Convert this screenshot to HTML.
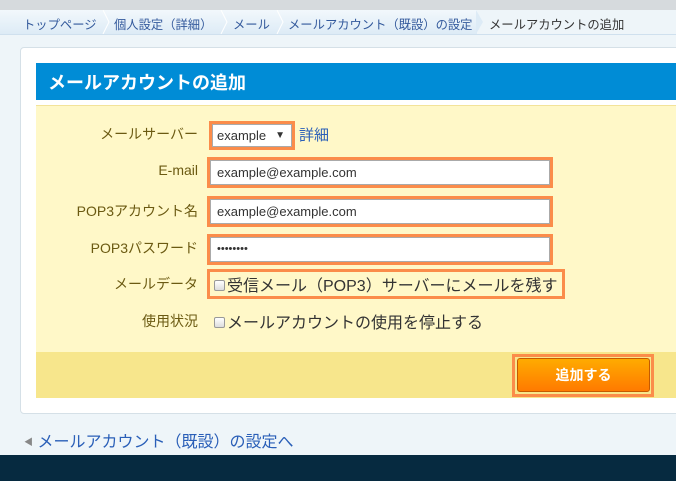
<!DOCTYPE html>
<html><head><meta charset="utf-8"><style>
*{box-sizing:border-box;margin:0;padding:0}
body{width:676px;height:481px;overflow:hidden;background:#eef5f9;font-family:"Liberation Sans","Noto Sans CJK JP",sans-serif;position:relative}
.top{position:absolute;left:0;top:0;width:676px;height:10px;background:#d6dadd}
.bc{position:absolute;left:0;top:10px;width:676px;height:25px;background:linear-gradient(#f2f8fc,#ddebf6);border-bottom:1px solid #cfe0ee;font-size:12.3px;color:#33599c}
.bc span{position:absolute;top:5px;white-space:nowrap}
.sep{position:absolute;top:0;width:8px;height:24px}
.card{position:absolute;left:20px;top:47px;width:680px;height:367px;background:#fff;border:1px solid #d5e0e7;border-radius:4px}
.hd{position:absolute;left:36px;top:63px;width:660px;height:37px;background:#008cd6;color:#fff;font-weight:bold;font-size:18px;padding:6px 0 0 12px}
.form{position:absolute;left:36px;top:105px;width:660px;height:247px;background:#fff8c8;border-top:1px solid #f3e39a}
.foot{position:absolute;left:36px;top:352px;width:660px;height:46px;background:#f7e68c}
.lb{position:absolute;right:478px;font-size:14px;color:#6b5a12;white-space:nowrap}
.ob{position:absolute;border:3px solid #fb8c4a}
.inp{position:absolute;background:#fff;border:1px solid #aaa;font-size:13px;color:#333;padding:4px 6px}
.cb{display:inline-block;width:11px;height:11px;border:1px solid #999;border-radius:2px;background:linear-gradient(#fff,#ddd);vertical-align:0px;margin-right:2px}
.ck{position:absolute;font-size:16px;color:#333;white-space:nowrap}
.btn{position:absolute;left:517px;top:358px;width:133px;height:34px;border:1px solid #c55a00;border-radius:3px;background:linear-gradient(#ffab00,#ff7a00);color:#fff;font-weight:bold;font-size:14px;text-align:center;line-height:32px}
.link{position:absolute;left:24px;top:428px;font-size:16px;color:#2a5fb8;white-space:nowrap}
.dark{position:absolute;left:0;top:455px;width:676px;height:26px;background:#062a40}
</style></head><body>
<div class="top"></div>
<div class="bc">
<span style="left:23px">トップページ</span>
<svg class="sep" style="left:102px" viewBox="0 0 8 24"><path d="M1 0 L7 12 L1 24" stroke="#fff" fill="none"/></svg>
<span style="left:114px">個人設定（詳細）</span>
<svg class="sep" style="left:220px" viewBox="0 0 8 24"><path d="M1 0 L7 12 L1 24" stroke="#fff" fill="none"/></svg>
<span style="left:233px">メール</span>
<svg class="sep" style="left:276px" viewBox="0 0 8 24"><path d="M1 0 L7 12 L1 24" stroke="#fff" fill="none"/></svg>
<span style="left:288px">メールアカウント（既設）の設定</span>
<div style="position:absolute;left:477px;top:0;width:199px;height:24px;background:#eef5f9"></div>
<svg class="sep" style="left:476px" viewBox="0 0 8 24"><path d="M0 0 L7 12 L0 24 Z" fill="#ddebf6"/></svg>
<span style="left:489px;color:#333">メールアカウントの追加</span>
</div>
<div class="card"></div>
<div class="hd">メールアカウントの追加</div>
<div class="form"></div>
<div class="foot"></div>

<div class="lb" style="top:124px">メールサーバー</div>
<div class="ob" style="left:209px;top:121px;width:86px;height:29px"></div>
<div class="inp" style="left:212px;top:124px;width:80px;height:23px;padding:3px 4px;font-size:13px">example <span style="position:absolute;right:6px;font-size:10px;top:5px">▼</span></div>
<div style="position:absolute;left:299px;top:124px;font-size:15px;color:#2a5fb8">詳細</div>

<div class="lb" style="top:162px">E-mail</div>
<div class="ob" style="left:207px;top:157px;width:346px;height:31px"></div>
<div class="inp" style="left:210px;top:160px;width:340px;height:25px">example@example.com</div>

<div class="lb" style="top:201px">POP3アカウント名</div>
<div class="ob" style="left:207px;top:196px;width:346px;height:31px"></div>
<div class="inp" style="left:210px;top:199px;width:340px;height:25px">example@example.com</div>

<div class="lb" style="top:238px">POP3パスワード</div>
<div class="ob" style="left:207px;top:234px;width:346px;height:31px"></div>
<div class="inp" style="left:210px;top:237px;width:340px;height:25px;font-size:11px;padding-top:5px">••••••••</div>

<div class="lb" style="top:274px">メールデータ</div>
<div class="ob" style="left:207px;top:269px;width:358px;height:30px"></div>
<div class="ck" style="left:214px;top:272px"><span class="cb"></span>受信メール（POP3）サーバーにメールを残す</div>

<div class="lb" style="top:311px">使用状況</div>
<div class="ck" style="left:214px;top:309px"><span class="cb"></span>メールアカウントの使用を停止する</div>

<div class="ob" style="left:512px;top:354px;width:142px;height:43px"></div>
<div class="btn">追加する</div>

<div class="link"><span style="font-size:9px;color:#888;vertical-align:2px">◀</span> メールアカウント（既設）の設定へ</div>
<div class="dark"></div>
</body></html>
